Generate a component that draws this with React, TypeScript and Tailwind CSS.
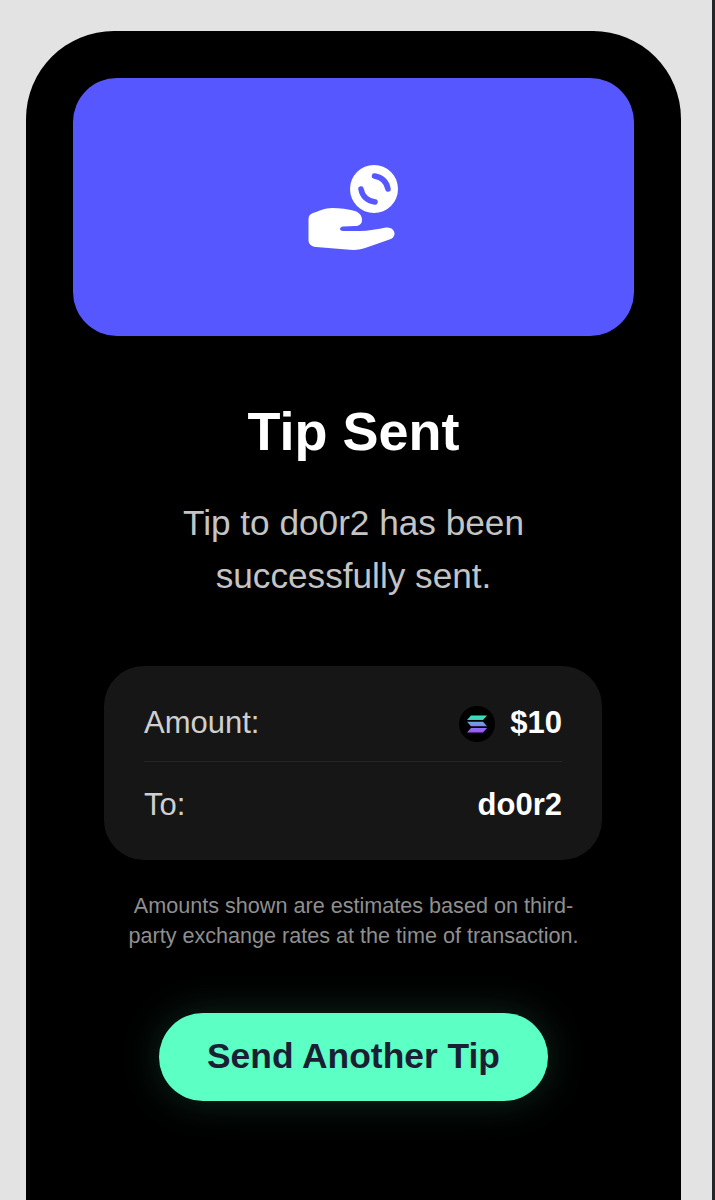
function HandCoinIcon() {
  return (
    <svg width="92" height="86" viewBox="0 0 92 86" aria-hidden>
      <circle cx="66" cy="25" r="24" fill="#ffffff" />
      <path d="M66.5 12 Q78 14 80 25" fill="none" stroke="#5757ff" strokeWidth="5.5" strokeLinecap="round" />
      <path d="M53 25 Q55 36 67 38" fill="none" stroke="#5757ff" strokeWidth="5.5" strokeLinecap="round" />
      <path
        d="M5 49 C11 47 17 44 24 44 C32 44 40 45 47 47 C52 49 54 52 54 56 C54 60 51 62 47 62 L35 62.5 C31 63 31 67 35 67 L52 67 C60 67 70 65 78 63.5 C83 63 86.5 66 86.5 69.5 C86.5 73 84 75 80 76 L60 83 C55 85 50 86 45 86 L8 83 C3 82.5 0.5 80 0.5 76 L0.5 55 C0.5 52 2 50 5 49 Z"
        fill="#ffffff"
      />
    </svg>
  );
}

function SolanaIcon() {
  return (
    <span className="flex size-9 items-center justify-center rounded-full bg-black">
      <svg width="20" height="18" viewBox="0 0 20 18" aria-hidden>
        <defs>
          <linearGradient id="sol" x1="0" y1="0" x2="0" y2="1">
            <stop offset="0" stopColor="#2af0a8" />
            <stop offset="0.55" stopColor="#7f8af0" />
            <stop offset="1" stopColor="#a24dff" />
          </linearGradient>
        </defs>
        <path d="M4 0.5 H20 L16 5 H0 Z M0 6.75 H16 L20 11.25 H4 Z M4 13 H20 L16 17.5 H0 Z" fill="url(#sol)" />
      </svg>
    </span>
  );
}

export default function App() {
  return (
    <div className="h-[1200px] overflow-hidden bg-[#e3e3e3] font-['Liberation_Sans',Arial,sans-serif]">
      <div className="flex h-full">
        <div className="ml-[26px] mt-[31px] h-[1169px] w-[655px] rounded-t-[88px] bg-black px-[47px] pt-[47px]">
          <div className="flex h-[258px] items-center justify-center rounded-[44px] bg-[#5757ff]">
            <HandCoinIcon />
          </div>

          <h1 className="mt-[64px] text-center text-[54px] leading-[62px] font-bold text-white">
            Tip Sent
          </h1>
          <p className="mt-[34px] text-center text-[35.2px] leading-[53px] text-[#c4c4c4]">
            Tip to do0r2 has been
            <br />
            successfully sent.
          </p>

          <div className="ml-[31px] mr-[32px] mt-[64px] rounded-[40px] bg-[#161616] px-[40px] text-[31px]">
            <div className="flex h-[96px] items-center justify-between border-b border-[#26262a] pt-[20px] text-[#cfcfcf]">
              <span>Amount:</span>
              <span className="flex items-center gap-[15px] font-bold text-white">
                <SolanaIcon />
                $10
              </span>
            </div>
            <div className="flex h-[98px] items-center justify-between pb-[12px] text-[#cfcfcf]">
              <span>To:</span>
              <span className="font-bold text-white">do0r2</span>
            </div>
          </div>

          <p className="mt-[31px] text-center text-[21.6px] leading-[30px] text-[#8f8f8f]">
            Amounts shown are estimates based on third-
            <br />
            party exchange rates at the time of transaction.
          </p>

          <div className="mt-[62px] flex justify-center">
            <button
              type="button"
              className="h-[88px] w-[389px] rounded-full bg-[#5cffc4] text-[35.4px] font-bold text-[#1b1f33] shadow-[0_0_40px_rgba(92,255,196,0.16)]"
            >
              Send Another Tip
            </button>
          </div>
        </div>
        <div className="ml-auto h-full w-[3px] bg-[#26262a]" />
      </div>
    </div>
  );
}
